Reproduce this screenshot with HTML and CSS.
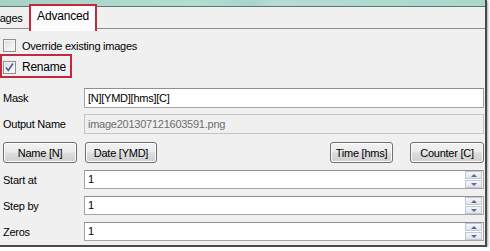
FILE: index.html
```html
<!DOCTYPE html>
<html lang="en">
<head>
  <meta charset="UTF-8">
  <title>Advanced</title>
  <link rel="stylesheet" href="styles.css">
</head>
<body>
  <div class="window">
    <div class="titlebar"></div>
    <div class="tabs">
      <div class="tab">Images</div>
      <div class="tab active">Advanced</div>
    </div>

    <div class="panel">
      <label class="check">
        <span class="box"></span>
        <span>Override existing images</span>
      </label>
      <label class="check rename">
        <span class="box">
          <svg width="11" height="11" viewBox="0 0 11 11"><path d="M2 5.5 L4.3 8.5 L9 1.5" fill="none" stroke="#4a5f97" stroke-width="1.6"/></svg>
        </span>
        <span>Rename</span>
      </label>

      <div class="field mask">
        <span class="label">Mask</span>
        <div class="input">[N][YMD][hms][C]</div>
      </div>
      <div class="field output">
        <span class="label">Output Name</span>
        <div class="input disabled">image201307121603591.png</div>
      </div>

      <div class="buttons">
        <button class="btn">Name [N]</button>
        <button class="btn">Date [YMD]</button>
        <span class="spacer"></span>
        <button class="btn">Time [hms]</button>
        <button class="btn">Counter [C]</button>
      </div>

      <div class="field num">
        <span class="label">Start at</span>
        <div class="input spin">1<span class="arrows"><i class="up"></i><i class="down"></i></span></div>
      </div>
      <div class="field num">
        <span class="label">Step by</span>
        <div class="input spin">1<span class="arrows"><i class="up"></i><i class="down"></i></span></div>
      </div>
      <div class="field num">
        <span class="label">Zeros</span>
        <div class="input spin">1<span class="arrows"><i class="up"></i><i class="down"></i></span></div>
      </div>
    </div>
  </div>
</body>
</html>
```

FILE: styles.css
```css
body {
  margin: 0;
  background-color: #fff;
  font-family: "Liberation Sans", Arial, sans-serif;
  font-size: 11px;
  letter-spacing: -0.25px;
  color: #000;
}
.window {
  width: 485px;
  height: 245px;
  background-color: #f0f0f0;
  border-right: 2px solid #4a4a4a;
  border-bottom: 2px solid #4a4a4a;
  box-shadow: 1px 1px 2px rgba(0, 0, 0, 0.35);
  overflow: hidden;
}
.titlebar {
  height: 6px;
  background: linear-gradient(to right, #a5d2c5, #b4ddd2 40%, #a9d4c9 52%, #b5dcd3 56%, #acd7cb);
  border-bottom: 1px solid #5d7a72;
}
.tabs {
  display: flex;
  height: 21px;
  border-bottom: 1px solid #8e8f8f;
}
.tab {
  margin-left: -12px;
  padding: 5px 6px 0 0;
  width: 35px;
}
.tab.active {
  margin: -3px 0 0 0;
  width: 64px;
  height: 22px;
  padding: 3px 0 0 0;
  text-align: center;
  font-size: 12px;
  letter-spacing: -0.2px;
  background-color: #fcfcfc;
  border: 2px solid #c3283f;
  border-bottom: none;
  position: relative;
  z-index: 1;
}
.panel {
  display: flex;
  flex-direction: column;
  padding: 8px 1px 0 3px;
}
.check {
  display: flex;
  align-items: center;
  height: 17px;
  gap: 6px;
}
.box {
  width: 11px;
  height: 11px;
  border: 1px solid #8f8f8f;
  background: linear-gradient(135deg, #dcdcdc, #fdfdfd);
  box-shadow: inset 0 0 0 1px #f4f4f4;
  display: flex;
  align-items: center;
  justify-content: center;
}
.check.rename {
  align-self: flex-start;
  align-items: flex-start;
  margin: 0 0 0 -3px;
  height: 14px;
  padding: 5px 4px 1px 1px;
  border: 2px solid #c3283f;
  gap: 6px;
  font-size: 12px;
}
.check.rename span:last-child {
  margin-top: -1px;
}
.field {
  display: grid;
  grid-template-columns: 81px 1fr;
  align-items: center;
}
.field.mask {
  margin-top: 10px;
}
.field.output {
  margin-top: 6px;
}
.input {
  height: 18px;
  line-height: 18px;
  padding: 0 3px;
  background-color: #fff;
  border: 1px solid #a4a4a4;
  border-top-color: #8f8f8f;
}
.input.disabled {
  background-color: #f0f0f0;
  border-color: #c4c4c4;
  color: #6d6d6d;
}
.buttons {
  display: flex;
  gap: 8px;
  margin-top: 8px;
}
.spacer {
  flex: 1;
}
.btn {
  height: 21px;
  width: 74px;
  padding: 0;
  font-family: inherit;
  font-size: 11px;
  letter-spacing: -0.25px;
  color: #000;
  border: 1px solid #707070;
  border-radius: 3px;
  background: linear-gradient(#f2f2f2, #ebebeb 48%, #dddddd 52%, #cfcfcf);
  box-shadow: inset 0 0 0 1px #fbfbfb;
}
.btn:nth-child(2) {
  width: 72px;
}
.btn:nth-child(4) {
  width: 63px;
  margin-right: 9px;
}
.field.num {
  margin-top: 7px;
}
.input.spin {
  height: 17px;
  line-height: 17px;
  display: flex;
  justify-content: space-between;
  align-items: center;
  padding-right: 1px;
}
.arrows {
  display: flex;
  flex-direction: column;
  gap: 1px;
}
.arrows i {
  width: 15px;
  height: 6px;
  border: 1px solid #c3c7d3;
  background: linear-gradient(#f4f6fa, #dfe4ee);
  display: flex;
  align-items: center;
  justify-content: center;
}
.arrows i::after {
  content: "";
  border-left: 3px solid transparent;
  border-right: 3px solid transparent;
}
.arrows .up::after {
  border-bottom: 3px solid #5a6b92;
}
.arrows .down::after {
  border-top: 3px solid #5a6b92;
}
```
